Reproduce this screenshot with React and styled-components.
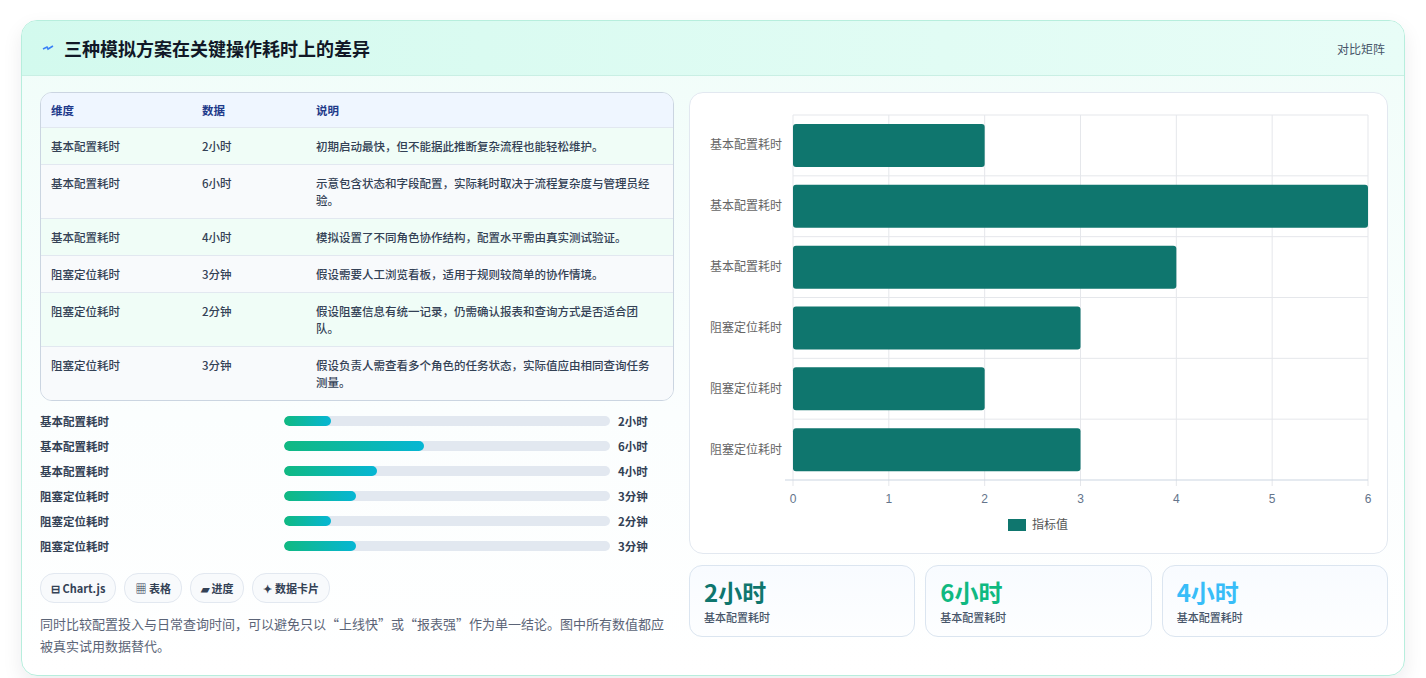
import React from "react";
import styled, { createGlobalStyle } from "styled-components";

const G = createGlobalStyle`
  body{margin:0;background:#fff;font-family:"Noto Sans CJK SC","Noto Sans",sans-serif;}
`;
const Page = styled.div`padding:20px 21px 20px 21px;`;
const Card = styled.div`
  border:1px solid #b7eedd;border-radius:16px;overflow:hidden;
  background:linear-gradient(180deg,#f0fdf9 0%,#fbfefe 60%,#ffffff 100%);
  box-shadow:0 8px 20px rgba(15,23,42,0.08);
`;
const Header = styled.div`
  height:54px;display:flex;align-items:center;justify-content:space-between;
  padding:0 19px 0 20px;border-bottom:1px solid #c9efe4;
  background:linear-gradient(90deg,#d3faee,#e8fdf7);
`;
const Title = styled.h2`
  margin:0;font-size:18px;font-weight:700;color:#111827;display:flex;align-items:center;gap:10px;
`;
const Tag = styled.span`font-size:12px;color:#475569;`;
const Body = styled.div`display:grid;grid-template-columns:634px 699px;gap:15px;padding:16px 18px 18px 18px;`;
const Left = styled.div`display:flex;flex-direction:column;`;
const Table = styled.div`border:1px solid #cbd5e1;border-radius:12px;overflow:hidden;background:#f8fafc;`;
const Row = styled.div`
  display:grid;grid-template-columns:151px 114px 1fr;padding:${p=>p.$head?"9px 10px 8px":"10px 10px 9px"};
  font-size:11.5px;line-height:17px;font-weight:${p=>p.$head?600:500};
  color:${p=>p.$head?"#1e3a8a":"#334155"};
  background:${p=>p.$head?"#eff6ff":p.$alt?"#f0fdf7":"#f8fafc"};
  border-top:${p=>p.$head?"none":"1px solid #e2e8f0"};
  & > span:last-child{padding-right:8px;}
`;
const Bars = styled.div`display:flex;flex-direction:column;gap:7px;margin-top:11px;`;
const BarRow = styled.div`display:grid;grid-template-columns:236px 326px 1fr;column-gap:8px;align-items:center;height:18px;font-size:11.5px;font-weight:600;color:#334155;`;
const Track = styled.div`height:10px;border-radius:5px;background:#e2e8f0;overflow:hidden;`;
const Fill = styled.div`height:100%;border-radius:5px;background:linear-gradient(90deg,#10b981,#06b6d4);`;
const Chips = styled.div`display:flex;gap:8px;margin-top:18px;`;
const Chip = styled.span`
  height:28px;padding:0 10px;border:1px solid #e2e8f0;border-radius:14px;background:#f8fafc;
  display:flex;align-items:center;gap:4px;font-size:11px;font-weight:600;color:#334155;
`;
const Note = styled.p`margin:10px 0 0;font-size:13px;line-height:22px;color:#5b6477;`;
const Right = styled.div`display:flex;flex-direction:column;gap:11px;`;
const ChartCard = styled.div`border:1px solid #e2e8f0;border-radius:14px;background:#fff;height:460px;`;
const Stats = styled.div`display:grid;grid-template-columns:repeat(3,1fr);gap:10px;`;
const Stat = styled.div`
  height:72px;box-sizing:border-box;border:1px solid #dbe5f0;border-radius:13px;padding:9px 14px;
  background:linear-gradient(180deg,#f8fbff,#fdfeff);
`;
const StatV = styled.div`font-size:24px;font-weight:700;line-height:34px;color:${p=>p.$c};`;
const StatL = styled.div`font-size:11px;color:#475569;font-weight:500;`;

const rows=[
 ["基本配置耗时","2小时","初期启动最快，但不能据此推断复杂流程也能轻松维护。"],
 ["基本配置耗时","6小时","示意包含状态和字段配置，实际耗时取决于流程复杂度与管理员经验。"],
 ["基本配置耗时","4小时","模拟设置了不同角色协作结构，配置水平需由真实测试验证。"],
 ["阻塞定位耗时","3分钟","假设需要人工浏览看板，适用于规则较简单的协作情境。"],
 ["阻塞定位耗时","2分钟","假设阻塞信息有统一记录，仍需确认报表和查询方式是否适合团队。"],
 ["阻塞定位耗时","3分钟","假设负责人需查看多个角色的任务状态，实际值应由相同查询任务测量。"],
];
const vals=[2,6,4,3,2,3];
const fills=[14.4,43,28.5,22,14.4,22];

function Chart(){
  const x0=103,w=575,y0=22,rh=365/6;
  return (
    <svg width="697" height="460" viewBox="0 0 697 460" fontFamily="Liberation Sans, Noto Sans CJK SC, sans-serif">
      {[0,1,2,3,4,5,6].map(i=><line key={i} x1={x0+i*w/6} x2={x0+i*w/6} y1={y0} y2={387+6} stroke="#e5e7eb"/>)}
      {[0,1,2,3,4,5].map(i=><line key={i} x1={x0} x2={x0+w} y1={y0+i*rh} y2={y0+i*rh} stroke="#e5e7eb"/>)}
      <line x1={x0-8} x2={x0+w} y1={387} y2={387} stroke="#cbd5e1"/>
      {vals.map((v,i)=>(
        <g key={i}>
          <rect x={x0} y={y0+i*rh+9} width={v*w/6} height={43} rx="3" fill="#0f766e"/>
          <text x={92} y={y0+i*rh+rh/2+4} textAnchor="end" fontSize="12" fill="#666" fontFamily="Noto Sans CJK SC, sans-serif">{rows[i][0]}</text>
        </g>
      ))}
      {[0,1,2,3,4,5,6].map(i=><text key={i} x={x0+i*w/6} y={410} textAnchor="middle" fontSize="12" fill="#64748b">{i}</text>)}
      <rect x={318} y={426} width={18} height={12} fill="#0f766e"/>
      <text x={342} y={436} fontSize="12" fill="#555" fontFamily="Noto Sans CJK SC, sans-serif">指标值</text>
    </svg>
  );
}

export default function App(){
  return (<Page><G/><Card>
    <Header>
      <Title>
        <svg width="12" height="8" viewBox="0 0 12 8"><path d="M1 5 L5 3 L6 5 L11 2" stroke="#3b82f6" strokeWidth="1.6" fill="none"/></svg>
        三种模拟方案在关键操作耗时上的差异
      </Title>
      <Tag>对比矩阵</Tag>
    </Header>
    <Body>
      <Left>
        <Table>
          <Row $head><span>维度</span><span>数据</span><span>说明</span></Row>
          {rows.map((r,i)=><Row key={i} $alt={i%2===0}><span>{r[0]}</span><span>{r[1]}</span><span>{r[2]}</span></Row>)}
        </Table>
        <Bars>
          {rows.map((r,i)=><BarRow key={i}><span>{r[0]}</span><Track><Fill style={{width:fills[i]+"%"}}/></Track><span>{r[1]}</span></BarRow>)}
        </Bars>
        <Chips>
          <Chip>⊟ Chart.js</Chip><Chip>▦ 表格</Chip><Chip>▰ 进度</Chip><Chip>✦ 数据卡片</Chip>
        </Chips>
        <Note>同时比较配置投入与日常查询时间，可以避免只以“上线快”或“报表强”作为单一结论。图中所有数值都应被真实试用数据替代。</Note>
      </Left>
      <Right>
        <ChartCard><Chart/></ChartCard>
        <Stats>
          <Stat><StatV $c="#0f766e">2小时</StatV><StatL>基本配置耗时</StatL></Stat>
          <Stat><StatV $c="#10b981">6小时</StatV><StatL>基本配置耗时</StatL></Stat>
          <Stat><StatV $c="#38bdf8">4小时</StatV><StatL>基本配置耗时</StatL></Stat>
        </Stats>
      </Right>
    </Body>
  </Card></Page>);
}
